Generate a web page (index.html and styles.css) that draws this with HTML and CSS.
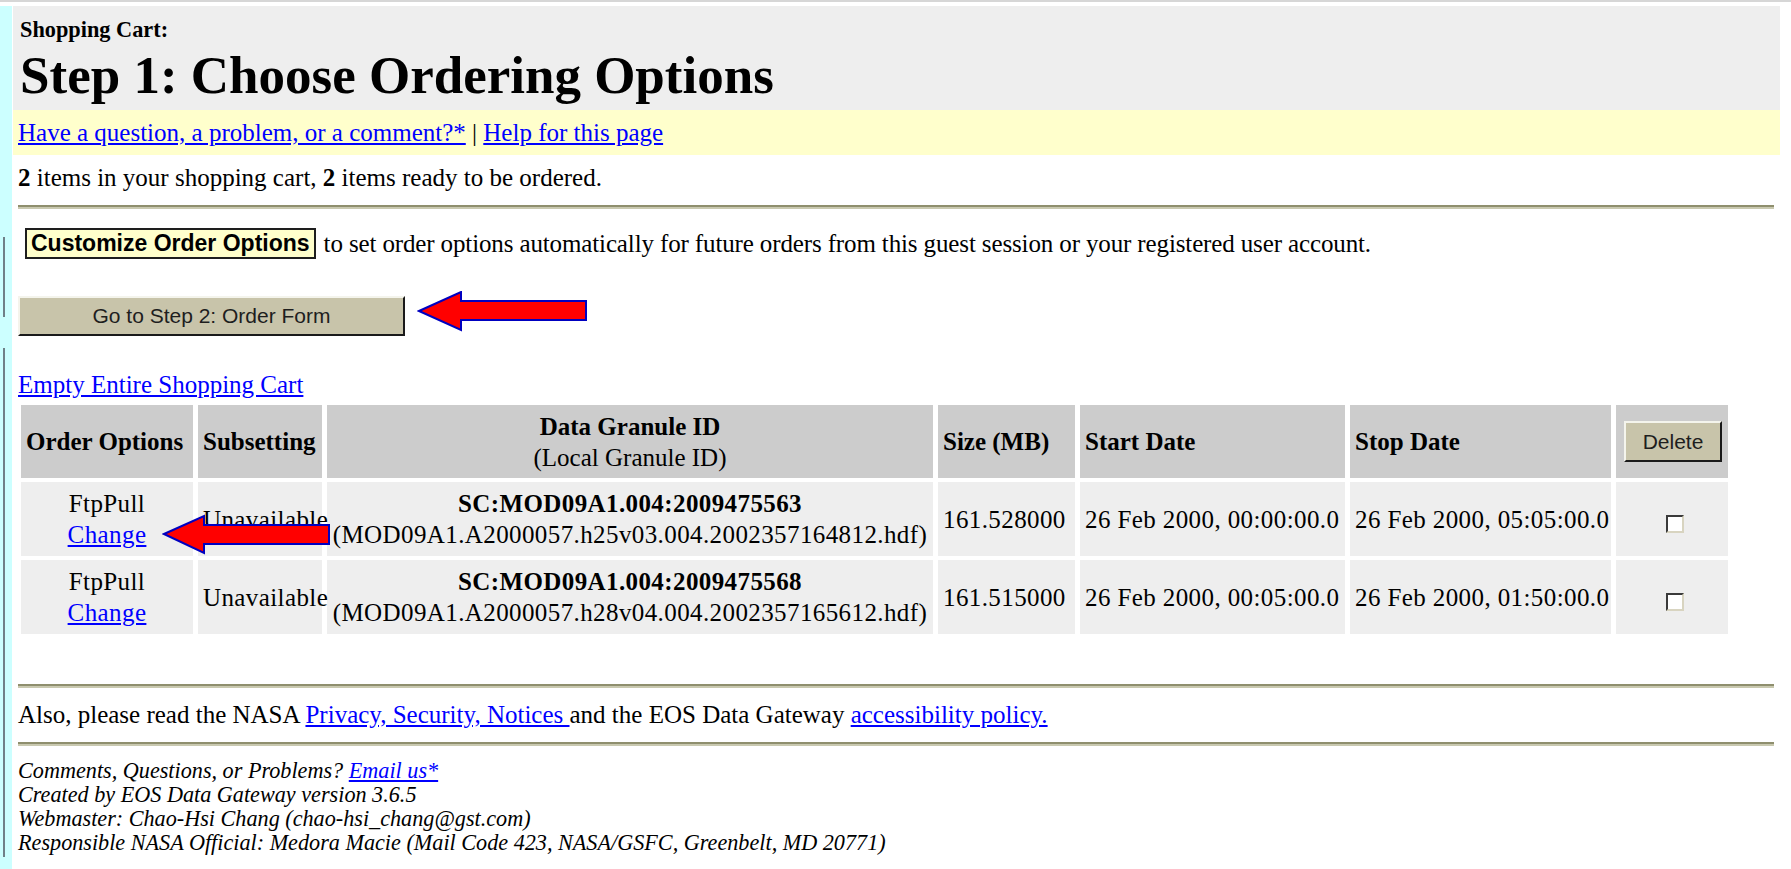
FILE: index.html
```html
<!DOCTYPE html>
<html lang="en">
<head>
<meta charset="utf-8">
<title>Shopping Cart: Step 1: Choose Ordering Options</title>
<link rel="stylesheet" href="styles.css">
</head>
<body>
<div class="topline"></div>
<div class="frame">
  <div class="strip"></div>
  <div class="page">
    <div class="banner">
      <div class="kicker">Shopping Cart:</div>
      <h1 class="title">Step 1: Choose Ordering Options</h1>
    </div>
    <div class="helpbar"><a href="#">Have a question, a problem, or a comment?*</a> | <a href="#">Help for this page</a></div>
    <div class="content">
      <p class="count"><b>2</b> items in your shopping cart, <b>2</b> items ready to be ordered.</p>
      <hr class="rule">
      <div class="customize"><span class="cust-btn">Customize Order Options</span><span class="cust-note">to set order options automatically for future orders from this guest session or your registered user account.</span></div>
      <div class="go-row">
        <button class="btn go" type="button">Go to Step 2: Order Form</button>
        <svg class="arrow arrow-go" width="172" height="41" viewBox="0 0 172 41"><polygon points="2,20 44,1 44,10 169,10 169,29 44,29 44,39" /></svg>
      </div>
      <p class="empty"><a href="#">Empty Entire Shopping Cart</a></p>
      <div class="cart">
        <table class="cart-table">
          <colgroup>
            <col class="c-opt"><col class="c-sub"><col class="c-id"><col class="c-size"><col class="c-start"><col class="c-stop"><col class="c-del">
          </colgroup>
          <thead>
            <tr>
              <th>Order Options</th>
              <th>Subsetting</th>
              <th class="center">Data Granule ID<br><span class="normal">(Local Granule ID)</span></th>
              <th>Size (MB)</th>
              <th>Start Date</th>
              <th>Stop Date</th>
              <th class="del-cell"><button class="btn del" type="button">Delete</button></th>
            </tr>
          </thead>
          <tbody>
            <tr>
              <td class="center">FtpPull<br><a href="#">Change</a></td>
              <td>Unavailable</td>
              <td class="center"><b>SC:MOD09A1.004:2009475563</b><br>(MOD09A1.A2000057.h25v03.004.2002357164812.hdf)</td>
              <td>161.528000</td>
              <td>26 Feb 2000, 00:00:00.0</td>
              <td>26 Feb 2000, 05:05:00.0</td>
              <td class="center"><input class="chk" type="checkbox"></td>
            </tr>
            <tr>
              <td class="center">FtpPull<br><a href="#">Change</a></td>
              <td>Unavailable</td>
              <td class="center"><b>SC:MOD09A1.004:2009475568</b><br>(MOD09A1.A2000057.h28v04.004.2002357165612.hdf)</td>
              <td>161.515000</td>
              <td>26 Feb 2000, 00:05:00.0</td>
              <td>26 Feb 2000, 01:50:00.0</td>
              <td class="center"><input class="chk" type="checkbox"></td>
            </tr>
          </tbody>
        </table>
        <svg class="arrow arrow-change" width="170" height="41" viewBox="0 0 170 41"><polygon points="2,20 42,2 42,11 167,11 167,30 42,30 42,39" /></svg>
      </div>
      <hr class="rule rule-low">
      <p class="notice">Also, please read the NASA <a href="#">Privacy, Security, Notices </a>and the EOS Data Gateway <a href="#">accessibility policy.</a></p>
      <hr class="rule">
      <address class="footer">
        Comments, Questions, or Problems? <a href="#">Email us*</a><br>
        Created by EOS Data Gateway version 3.6.5<br>
        Webmaster: Chao-Hsi Chang (chao-hsi_chang@gst.com)<br>
        Responsible NASA Official: Medora Macie (Mail Code 423, NASA/GSFC, Greenbelt, MD 20771)
      </address>
    </div>
  </div>
</div>
</body>
</html>
```
FILE: styles.css
```css
html, body {
  margin: 0;
  padding: 0;
  background: #fff;
}

body {
  width: 1791px;
  height: 869px;
  overflow: hidden;
  font-family: "Liberation Serif", "Times New Roman", serif;
  font-size: 25px;
  line-height: 30px;
  color: #000;
}

a {
  color: #0000ff;
  text-decoration: underline;
}

.topline {
  height: 2px;
  background: #d6d6d6;
  margin-bottom: 4px;
}

.frame {
  display: flex;
  height: 863px;
}

/* left frame edge: pale cyan with dark splitter marks */
.strip {
  flex: none;
  width: 12px;
  background:
    linear-gradient(to bottom,
      transparent 0, transparent 231px,
      #6f8088 231px, #6f8088 311px,
      transparent 311px, transparent 342px,
      #6f8088 342px, #6f8088 851px,
      transparent 851px) 3px 0 / 2px 100% no-repeat,
    #ccffff;
}

.page {
  flex: none;
  width: 1767px;
  margin-left: 1px;
}

.banner {
  background: #eeeeee;
  height: 104px;
  box-sizing: border-box;
  padding: 11px 0 0 7px;
}

.kicker {
  font-weight: bold;
  font-size: 22.3px;
  line-height: 26px;
}

.title {
  margin: 4px 0 0;
  font-size: 53px;
  line-height: 56px;
  font-weight: bold;
}

.helpbar {
  background: #ffffcc;
  height: 45px;
  box-sizing: border-box;
  padding: 8px 0 0 5px;
}

.content {
  padding: 0 6px 0 5px;
}

.count {
  margin: 8px 0 0;
}

.rule {
  border: 0;
  height: 4px;
  margin: 12px 0 0;
  background: linear-gradient(to bottom, #8f8f6e 0, #8f8f6e 50%, #c9c9b0 50%, #c9c9b0 100%);
}

.rule-low {
  margin-top: 46px;
}

.customize {
  display: flex;
  align-items: center;
  gap: 8px;
  margin-top: 19px;
  padding-left: 7px;
  height: 31px;
}

.cust-btn {
  box-sizing: border-box;
  height: 31px;
  padding: 0 4px;
  border: 2px solid #1e1e1e;
  background: #ffffcc;
  font-family: "Liberation Sans", Arial, sans-serif;
  font-weight: bold;
  font-size: 23px;
  line-height: 27px;
}

.cust-note {
  letter-spacing: -0.13px;
}

.go-row {
  display: flex;
  align-items: flex-start;
  gap: 12px;
  margin-top: 37px;
}

.btn {
  box-sizing: border-box;
  margin: 0;
  padding: 0;
  background: #c8c4aa;
  color: #1e1e1e;
  font-family: "Liberation Sans", Arial, sans-serif;
  border-style: solid;
  border-width: 2px;
  border-color: #f4f4ec #1a1a1a #1a1a1a #f4f4ec;
}

.go {
  width: 387px;
  height: 40px;
  font-size: 21px;
}

.arrow polygon {
  fill: #ff0000;
  stroke: #0000c0;
  stroke-width: 2;
}

.arrow-go {
  margin-top: -5px;
}

.empty {
  margin: 34px 0 0;
}

.cart {
  position: relative;
  margin-top: 1px;
}

.cart-table {
  margin-left: -2px;
  border-collapse: separate;
  border-spacing: 5px 4px;
  table-layout: fixed;
  width: 1717px;
}

.c-opt { width: 172px; }
.c-sub { width: 124px; }
.c-id { width: 606px; }
.c-size { width: 137px; }
.c-start { width: 265px; }
.c-stop { width: 261px; }
.c-del { width: 112px; }

.cart-table th,
.cart-table td {
  padding: 0 5px;
  white-space: nowrap;
  vertical-align: middle;
  line-height: 31px;
  text-align: left;
  overflow: visible;
}

.cart-table th {
  background: #cccccc;
  height: 73px;
  font-weight: bold;
}

.cart-table td {
  background: #eeeeee;
  height: 74px;
  letter-spacing: 0.4px;
}

.cart-table .center {
  text-align: center;
}

.cart-table .normal {
  font-weight: normal;
}

.cart-table th.del-cell {
  padding: 0 0 0 8px;
}

.del {
  display: block;
  width: 98px;
  height: 41px;
  font-size: 21px;
}

.chk {
  appearance: none;
  -webkit-appearance: none;
  box-sizing: border-box;
  display: inline-block;
  width: 18px;
  height: 18px;
  margin: 4px 0 0 6px;
  vertical-align: middle;
  background: #fff;
  border: 2px solid;
  border-color: #3a3a3a #d8d4c0 #d8d4c0 #3a3a3a;
}

.arrow-change {
  position: absolute;
  left: 144px;
  top: 113px;
}

.notice {
  margin: 12px 0 0;
}

.footer {
  margin-top: 13px;
  font-style: italic;
  font-size: 22.2px;
  line-height: 24px;
}
```
